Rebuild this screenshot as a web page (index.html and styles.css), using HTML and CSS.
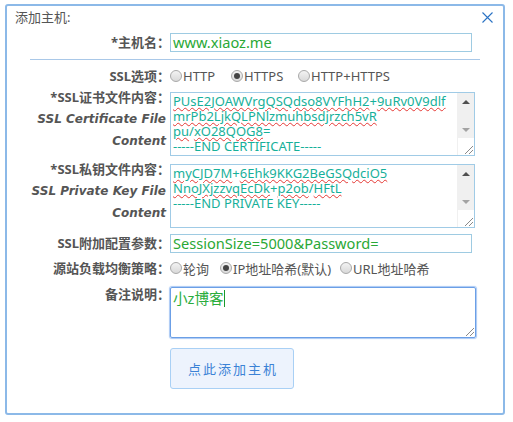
FILE: index.html
```html
<!DOCTYPE html>
<html lang="zh-CN">
<head>
<meta charset="utf-8">
<title>添加主机</title>
<link rel="stylesheet" href="styles.css">
</head>
<body>
<div class="dialog">
  <div class="head">
    <span class="title">添加主机:</span>
    <svg class="close" viewBox="0 0 11 11" width="11" height="11"><path d="M0.5 0.5L10.5 10.5M10.5 0.5L0.5 10.5" stroke="#2a72c4" stroke-width="1.1" fill="none"/></svg>
  </div>

  <div class="row r-host">
    <div class="label">*主机名：</div>
    <div class="input">www.xiaoz.me</div>
  </div>

  <div class="sep"></div>

  <div class="row r-ssl">
    <div class="label">SSL选项：</div>
    <div class="opts">
      <span class="opt w61"><span class="radio"></span>HTTP</span>
      <span class="opt w67"><span class="radio on"></span>HTTPS</span>
      <span class="opt"><span class="radio"></span>HTTP+HTTPS</span>
    </div>
  </div>

  <div class="row r-cert">
    <div class="label">*SSL证书文件内容：<br><span class="en">SSL Certificate File</span><br><span class="en">Content</span></div>
    <div class="area">
      <div class="area-text"><span class="sp">PUsE2JOAWVrgQSQdso8VYFhH2</span>+<span class="sp">9uRv0V9dlf</span>
<span class="sp">mrPb2LjkQLPNlzmuhbsdjrzch5vR</span>
<span class="sp">pu</span>/<span class="sp">xO28QOG8</span>=
-----END CERTIFICATE-----</div>
      <div class="sb">
        <div class="sb-track">
          <span class="sb-btn"><span class="arr up"></span></span>
          <span class="sb-btn"><span class="arr down"></span></span>
        </div>
        <div class="sb-corner"><span class="grip"></span></div>
      </div>
    </div>
  </div>

  <div class="row r-key">
    <div class="label">*SSL私钥文件内容：<br><span class="en">SSL Private Key File</span><br><span class="en">Content</span></div>
    <div class="area">
      <div class="area-text"><span class="sp">myCJD7M</span>+<span class="sp">6Ehk9KKG2BeGSQdciO5</span>
<span class="sp">NnoJXjzzvqEcDk</span>+<span class="sp">p2ob</span>/<span class="sp">HFtL</span>
-----END PRIVATE KEY-----</div>
      <div class="sb">
        <div class="sb-track">
          <span class="sb-btn"><span class="arr up"></span></span>
          <span class="sb-btn"><span class="arr down"></span></span>
        </div>
        <div class="sb-corner"><span class="grip"></span></div>
      </div>
    </div>
  </div>

  <div class="row r-param">
    <div class="label">SSL附加配置参数：</div>
    <div class="input">SessionSize=5000&amp;Password=</div>
  </div>

  <div class="row r-lb">
    <div class="label">源站负载均衡策略：</div>
    <div class="opts">
      <span class="opt w50"><span class="radio"></span>轮询</span>
      <span class="opt w120"><span class="radio on"></span>IP地址哈希(默认)</span>
      <span class="opt"><span class="radio"></span>URL地址哈希</span>
    </div>
  </div>

  <div class="row r-remark">
    <div class="label">备注说明：</div>
    <div class="remark"><span class="remark-text">小z博客</span><span class="caret"></span><span class="grip"></span></div>
  </div>

  <div class="btn-row">
    <div class="btn">点此添加主机</div>
  </div>
</div>
</body>
</html>
```
FILE: styles.css
```css
* { box-sizing: border-box; }
html, body { margin: 0; background: #fff; }
body {
  font-family: "Noto Sans", "Noto Sans CJK SC", sans-serif;
  font-size: 13px;
  color: #555;
}
.dialog {
  margin: 4px 0 0 5px;
  width: 500px;
  height: 411px;
  border: 2px solid #8cb9e8;
  border-radius: 3px;
}
.head {
  height: 22px;
  display: flex;
  align-items: center;
  justify-content: space-between;
  padding: 0 10px 0 8px;
}
.title { line-height: 22px; }
.close { display: block; }

.row { display: flex; }
.label {
  flex: none;
  width: 163px;
  text-align: right;
  font-weight: bold;
  line-height: 21px;
  white-space: nowrap;
}
.label .en {
  display: inline-block;
  font-family: "DejaVu Sans", sans-serif;
  font-size: 12px;
  font-style: italic;
  margin-right: 4px;
}
.input {
  width: 302px;
  height: 19px;
  border: 1px solid #9ecbe2;
  font-size: 14.6px;
  line-height: 17px;
  padding-left: 2px;
  color: #2aa836;
  white-space: nowrap;
}
.r-host { margin-top: 5px; height: 19px; align-items: center; }
.sep {
  margin: 7px 0 0 23px;
  width: 450px;
  height: 1px;
  background: #a9c8e8;
}
.r-ssl { margin-top: 6px; height: 20px; align-items: center; }
.opts { display: flex; align-items: center; }
.opt { display: flex; align-items: center; flex: none; white-space: nowrap; }
.w61 { width: 61px; }
.w67 { width: 67px; }
.w50 { width: 50px; }
.w120 { width: 120px; }
.radio {
  width: 12px;
  height: 12px;
  margin-right: 1px;
  border-radius: 50%;
  border: 1px solid #a9a9a9;
  background: linear-gradient(#f3f3f3, #d9d9d9);
  display: flex;
  align-items: center;
  justify-content: center;
}
.radio.on::after {
  content: "";
  width: 6px;
  height: 6px;
  border-radius: 50%;
  background: #444;
}

.r-cert { margin-top: 1px; align-items: flex-start; }
.r-key { margin-top: 3px; align-items: flex-start; }
.area {
  margin-top: 5px;
  width: 305px;
  height: 64px;
  border: 1px solid #a0cbe6;
  display: flex;
}
.area-text {
  flex: 1;
  padding: 1px 0 0 2px;
  white-space: pre;
  overflow: hidden;
  font-size: 13px;
  line-height: 15px;
  color: #17b09a;
}
.sp {
  text-decoration: underline wavy #e53935;
  text-decoration-thickness: 1px;
  text-underline-offset: 1px;
}
.sb { width: 17px; flex: none; display: flex; flex-direction: column; }
.sb-track {
  flex: 1;
  background: #f0f0f0;
  display: flex;
  flex-direction: column;
  justify-content: space-between;
}
.sb-btn { height: 17px; display: flex; align-items: center; justify-content: center; }
.arr { width: 0; height: 0; border-left: 4px solid transparent; border-right: 4px solid transparent; }
.arr.up { border-bottom: 4px solid #505050; }
.arr.down { border-top: 4px solid #a3a3a3; }
.sb-corner {
  height: 17px;
  background: #fff;
  border-left: 1px solid #f0f0f0;
  position: relative;
}
.grip {
  position: absolute;
  right: 1px;
  bottom: 1px;
  width: 8px;
  height: 8px;
  background:
    linear-gradient(135deg, transparent 0 46%, #8a8a8a 46% 54%, transparent 54% 70%, #8a8a8a 70% 78%, transparent 78%);
}

.r-param { margin-top: 6px; height: 19px; align-items: center; }
.r-lb { margin-top: 5px; height: 20px; align-items: center; }

.r-remark { margin-top: 6px; align-items: flex-start; }
.remark {
  position: relative;
  margin-top: 3px;
  width: 306px;
  height: 51px;
  border: 1px solid #6b9fe6;
  box-shadow: 0 0 1px 1px #a9c8f4;
  border-radius: 2px;
  padding: 1px 0 0 2px;
  font-size: 14.6px;
  line-height: 18px;
  color: #2aad3c;
  display: flex;
  align-items: flex-start;
}
.caret { width: 1px; height: 17px; background: #1a9a2c; margin-top: 1px; }

.btn-row { margin-top: 10px; padding-left: 163px; }
.btn {
  width: 124px;
  height: 41px;
  border: 1px solid #a9d0f5;
  border-radius: 3px;
  background: #edf3fd;
  color: #3b82d6;
  font-size: 13px;
  letter-spacing: 2px;
  padding-left: 2px;
  display: flex;
  align-items: center;
  justify-content: center;
}
```
